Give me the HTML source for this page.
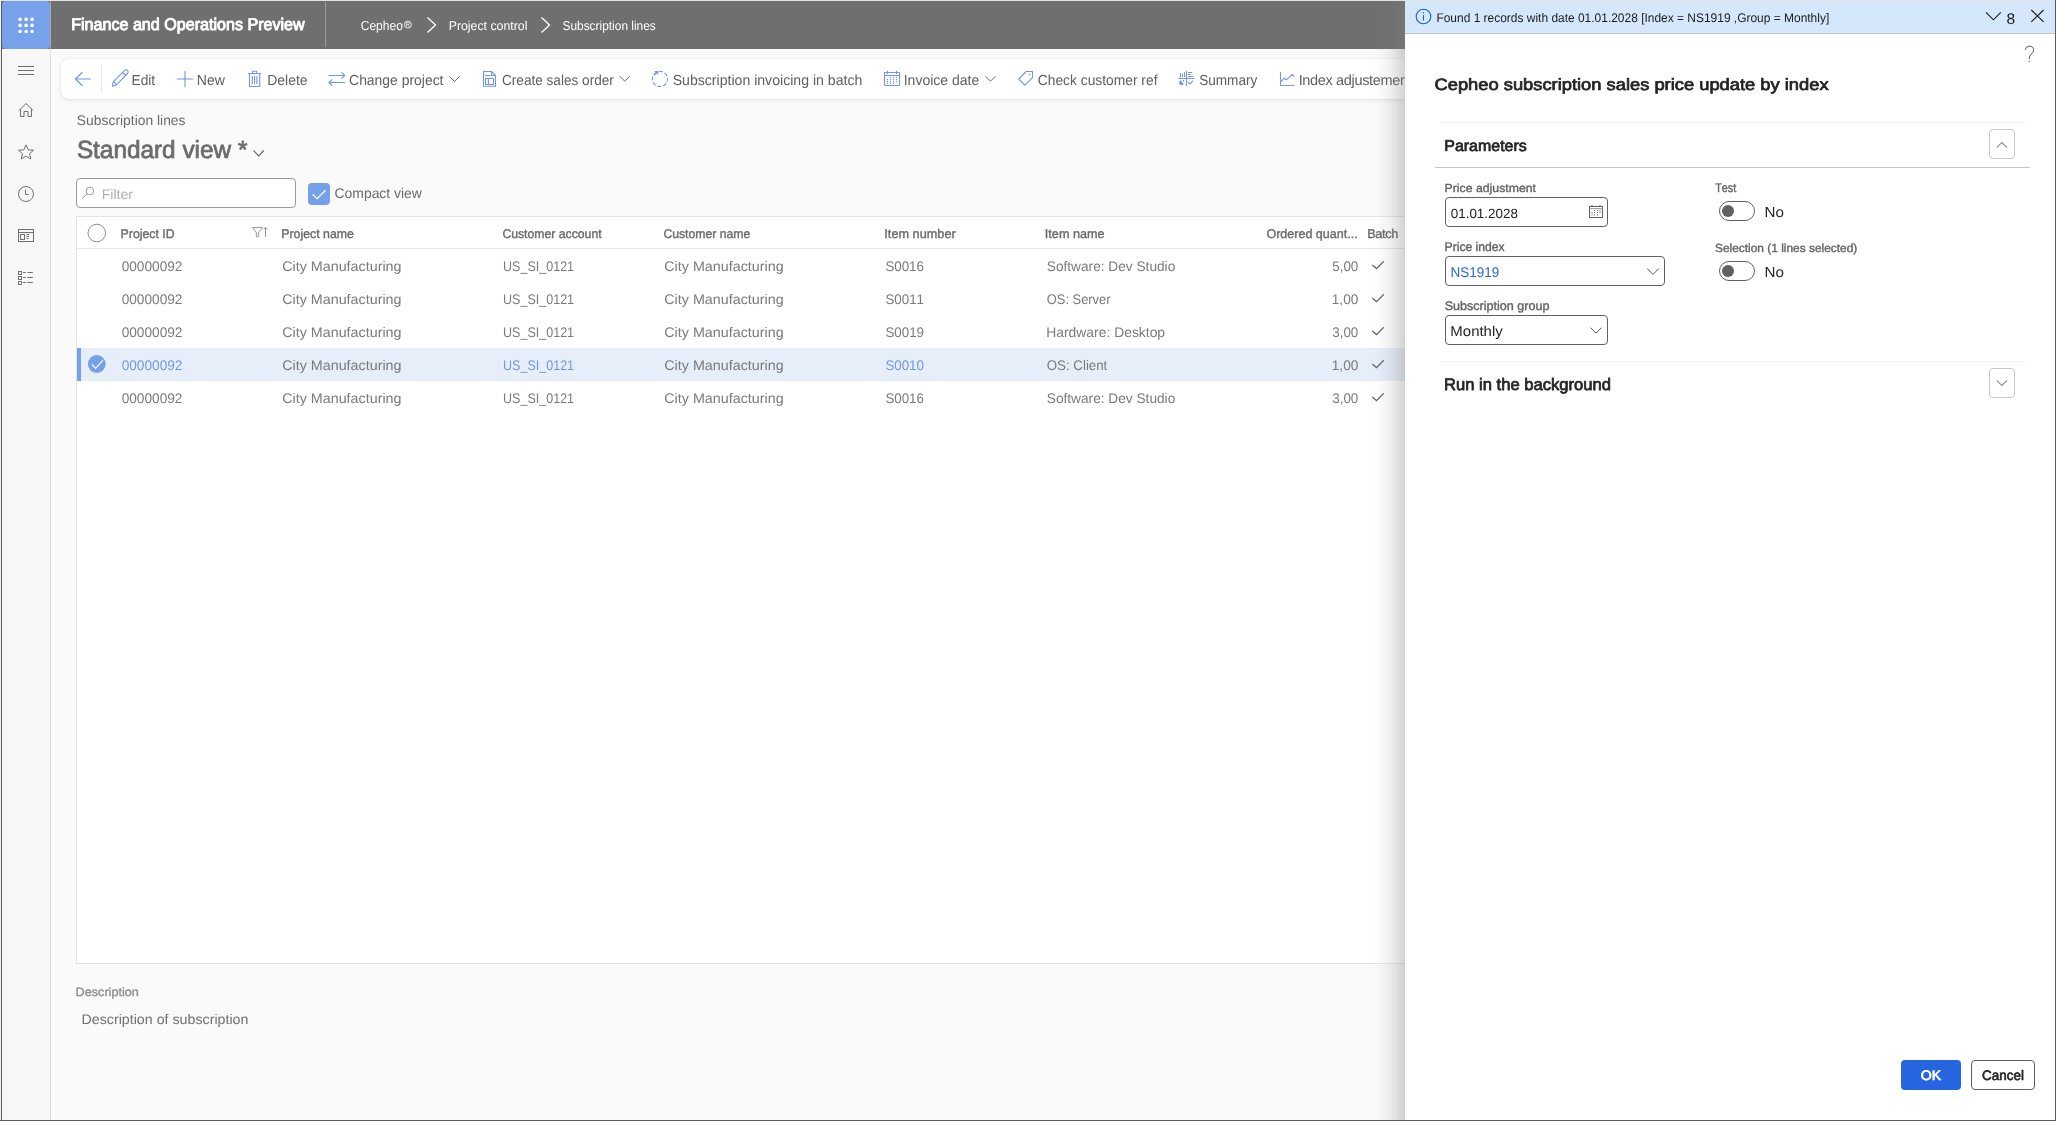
<!DOCTYPE html>
<html><head><meta charset="utf-8"><title>Subscription lines</title>
<style>
html,body{margin:0;padding:0;}
body{width:2056px;height:1121px;position:relative;overflow:hidden;background:#fbfafa;font-family:"Liberation Sans",sans-serif;font-kerning:none;}
.t{position:absolute;white-space:nowrap;font-kerning:none;text-rendering:geometricPrecision;}
.r{position:absolute;display:block;}
svg.r{overflow:visible;}
svg.tx{will-change:transform;}
text{font-family:"Liberation Sans",sans-serif;text-rendering:geometricPrecision;font-kerning:none;white-space:pre;}
</style></head><body>

<div class="r" style="left:2px;top:49px;width:48px;height:1071px;background:#f8f7f5;"></div>
<div class="r" style="left:50px;top:49px;width:1px;height:1071px;background:#dcdcdc;"></div>
<div class="r" style="left:2px;top:1px;width:2053px;height:48px;background:#6f6f6f;"></div>
<div class="r" style="left:2px;top:1px;width:48px;height:48px;background:#77a1ea;border-radius:4px;"></div>
<svg class="r" style="left:14px;top:13px;" width="24" height="24" viewBox="14 13 24 24"><circle cx="20.1" cy="19.4" r="1.8" fill="#fff"/><circle cx="20.1" cy="25.4" r="1.8" fill="#fff"/><circle cx="20.1" cy="31.5" r="1.8" fill="#fff"/><circle cx="26.1" cy="19.4" r="1.8" fill="#fff"/><circle cx="26.1" cy="25.4" r="1.8" fill="#fff"/><circle cx="26.1" cy="31.5" r="1.8" fill="#fff"/><circle cx="32.1" cy="19.4" r="1.8" fill="#fff"/><circle cx="32.1" cy="25.4" r="1.8" fill="#fff"/><circle cx="32.1" cy="31.5" r="1.8" fill="#fff"/></svg>
<div class="r" style="left:325px;top:2px;width:1px;height:45px;background:#9c9c9c;"></div>
<div class="r" style="left:50px;top:1px;width:1px;height:48px;background:#a9a9a9;"></div>
<svg class="r tx" style="left:68px;top:8px" width="245" height="30" viewBox="68 8 245 30"><text x="71.18" y="30" font-size="16.860" textLength="233.481" lengthAdjust="spacingAndGlyphs" fill="#ffffff" stroke="#ffffff" stroke-width="0.927" stroke-linejoin="round" style="">Finance and Operations Preview</text></svg>
<svg class="r tx" style="left:357px;top:13px" width="53" height="24" viewBox="357 13 53 24"><text x="360.69" y="30" font-size="13.081" textLength="42.218" lengthAdjust="spacingAndGlyphs" fill="#ffffff" style="">Cepheo</text></svg>
<svg class="r" style="left:400px;top:18px;" width="16" height="14" viewBox="400 18 16 14"><circle cx="407.85" cy="24.55" r="3.5" fill="none" stroke="#fff" stroke-width="0.85"/><path d="M406.6 26.6 V22.6 H408.2 Q409.3 22.6 409.3 23.6 Q409.3 24.6 408.2 24.6 H406.6 M408.2 24.6 L409.4 26.6" fill="none" stroke="#fff" stroke-width="0.7"/></svg>
<svg class="r tx" style="left:445px;top:13px" width="89" height="24" viewBox="445 13 89 24"><text x="448.69" y="30" font-size="12.791" textLength="78.735" lengthAdjust="spacingAndGlyphs" fill="#ffffff" style="">Project control</text></svg>
<svg class="r tx" style="left:559px;top:13px" width="104" height="24" viewBox="559 13 104 24"><text x="562.46" y="30" font-size="12.791" textLength="93.371" lengthAdjust="spacingAndGlyphs" fill="#ffffff" style="">Subscription lines</text></svg>
<svg class="r" style="left:420px;top:10px;" width="140" height="30" viewBox="420 10 140 30"><path d="M427.5 17.5 L435.5 25 L427.5 32.5" fill="none" stroke="#fff" stroke-width="1.3"/><path d="M541.5 17.5 L549.5 25 L541.5 32.5" fill="none" stroke="#fff" stroke-width="1.3"/></svg>
<svg class="r" style="left:10px;top:55px;" width="35" height="240" viewBox="10 55 35 240"><g fill="none" stroke="#707070" stroke-width="1"><path d="M18 66.5h16M18 70.5h16M18 74.5h16"/><path d="M19 110.5 L26 103.5 L33 110.5 M20.5 109 V116.5 H24 V111.5 H28 V116.5 H31.5 V109"/><path d="M26 144.8 L28.2 149.9 L33.6 150.2 L29.5 153.7 L30.8 159 L26 156.1 L21.2 159 L22.5 153.7 L18.4 150.2 L23.8 149.9 Z"/><circle cx="26" cy="194" r="7.5"/><path d="M25.5 189.5 V194.5 H28.8"/><rect x="18.5" y="229.5" width="15" height="12"/><path d="M18.5 232.5 H33.5"/><rect x="20.5" y="234.5" width="4" height="5"/><path d="M26.5 234.5h2.5M26.5 236.5h2.5M26.5 238.5h2"/><rect x="18.5" y="271.5" width="3" height="3"/><rect x="18.5" y="276.5" width="3" height="3"/><rect x="18.5" y="281.5" width="3" height="3"/><path d="M23 272.5h2.8M27.3 272.5h5.5M23 277.5h2.8M27.3 277.5h5.5M23 282.5h2.8M27.3 282.5h5.5"/></g></svg>
<div class="r" style="left:61px;top:59px;width:1400px;height:40px;background:#fff;border-radius:8px;box-shadow:0 1px 4px rgba(0,0,0,0.10),0 0 2px rgba(0,0,0,0.05);"></div>
<div class="r" style="left:101px;top:64px;width:1px;height:30px;background:#e8e8e8;"></div>
<svg class="r" style="left:60px;top:60px;" width="1350" height="40" viewBox="60 60 1350 40"><g fill="none" stroke="#7196ec" stroke-width="1.1" stroke-linecap="round" stroke-linejoin="round"><path d="M82 72.5 L75.5 79 L82 85.5 M75.5 79 H90.5"/><path d="M112.3 86.3 L113.2 81.8 L124.6 70.4 Q126.2 69.2 127.6 70.6 Q128.9 72 127.6 73.5 L116.3 84.9 Z M122.6 72.5 L125.6 75.5 M113.6 81.6 L116.6 84.6"/><path d="M185 71.2 V86.8 M177.2 79 H192.8"/><path d="M248.3 73.5 H260.8 M252.5 73.5 V71.3 H256.8 V73.5 M249.5 73.5 V86.5 H259.7 V73.5 M252.3 76.3 V83.8 M254.6 76.3 V83.8 M256.9 76.3 V83.8"/><path d="M329 75.5 H344.7 M341.8 72.7 L344.7 75.5 L341.8 78.3 M344.7 82.5 H329 M332 79.7 L329 82.5 L332 85.3"/><path d="M483.5 71.5 H491.5 L495.5 75.5 V86.3 H483.5 Z M491.5 71.5 V75.5 H495.5 M485.5 75.5 H490 M485.5 78.5 H493.5 V84.5 H485.5 Z M488.4 78.5 V84.5"/><circle cx="660" cy="79" r="7.6" stroke-dasharray="3.2 2.77" stroke-dashoffset="1"/><path d="M654.5 75 L657.8 71.7 M655.2 71.5 H657.8 V74"/><rect x="884.5" y="72.5" width="15" height="13" rx="0.5"/><path d="M884.5 75.5 H899.5 M887.5 71 V73.5 M896.5 71 V73.5"/><path d="M1026.2 71.5 H1032.5 V77.6 L1024.8 85.2 L1018.8 79 Z"/><path d="M1179 78.5 H1194 M1186.5 71.3 V85.8 M1180.5 73.6 V76.8 M1182.5 74.4 V76.8 M1184.5 72.5 V76.8 M1188.3 72.5 H1191.8 M1188.3 74.5 H1190.6 M1188.3 76.5 H1192.8 M1188.5 82.5 L1190.3 84 L1192.5 81.2"/><path d="M1280.5 72.3 V85.5 H1293.9 M1280.8 81.7 L1284.5 78.2 L1286.5 79.8 L1292.4 74.3 L1293.8 76.3"/></g><circle cx="890.5" cy="77.5" r="0.65" fill="#7196ec"/><circle cx="893.5" cy="77.5" r="0.65" fill="#7196ec"/><circle cx="896.5" cy="77.5" r="0.65" fill="#7196ec"/><circle cx="887.5" cy="79.5" r="0.65" fill="#7196ec"/><circle cx="890.5" cy="79.5" r="0.65" fill="#7196ec"/><circle cx="893.5" cy="79.5" r="0.65" fill="#7196ec"/><circle cx="896.5" cy="79.5" r="0.65" fill="#7196ec"/><circle cx="887.5" cy="81.5" r="0.65" fill="#7196ec"/><circle cx="890.5" cy="81.5" r="0.65" fill="#7196ec"/><circle cx="893.5" cy="81.5" r="0.65" fill="#7196ec"/><circle cx="896.5" cy="81.5" r="0.65" fill="#7196ec"/><circle cx="887.5" cy="83.5" r="0.65" fill="#7196ec"/><circle cx="890.5" cy="83.5" r="0.65" fill="#7196ec"/><circle cx="893.5" cy="83.5" r="0.65" fill="#7196ec"/><circle cx="1029.5" cy="74.5" r="0.8" fill="#7196ec"/><path d="M1181.8 80.6 A2.3 2.3 0 1 0 1183.7 82.8 L1181.8 82.8 Z" fill="#7196ec"/><path d="M1183 79.8 A2.3 2.3 0 0 1 1184.6 81.6 L1183 81.6 Z" fill="#7196ec"/><path d="M449.5 76.5 L454.5 81.5 L459.5 76.5 M619.7 76.2 L624.7 81.2 L629.7 76.2 M985.5 76.2 L990.5 81.2 L995.5 76.2" fill="none" stroke="#6a6a6a" stroke-width="1"/></svg>
<svg class="r tx" style="left:128px;top:66px" width="35" height="27" viewBox="128 66 35 27"><text x="131.47" y="85" font-size="14.535" textLength="23.731" lengthAdjust="spacingAndGlyphs" fill="#5f5f5f" style="">Edit</text></svg>
<svg class="r tx" style="left:193px;top:66px" width="40" height="27" viewBox="193 66 40 27"><text x="196.85" y="85" font-size="14.535" textLength="28.119" lengthAdjust="spacingAndGlyphs" fill="#5f5f5f" style="">New</text></svg>
<svg class="r tx" style="left:264px;top:66px" width="51" height="27" viewBox="264 66 51 27"><text x="267.15" y="85" font-size="14.535" textLength="40.471" lengthAdjust="spacingAndGlyphs" fill="#5f5f5f" style="">Delete</text></svg>
<svg class="r tx" style="left:346px;top:66px" width="105" height="27" viewBox="346 66 105 27"><text x="349.09" y="85" font-size="14.535" textLength="94.409" lengthAdjust="spacingAndGlyphs" fill="#5f5f5f" style="">Change project</text></svg>
<svg class="r tx" style="left:499px;top:66px" width="122" height="27" viewBox="499 66 122 27"><text x="502.01" y="85" font-size="14.535" textLength="111.816" lengthAdjust="spacingAndGlyphs" fill="#5f5f5f" style="">Create sales order</text></svg>
<svg class="r tx" style="left:669px;top:66px" width="200" height="27" viewBox="669 66 200 27"><text x="672.66" y="85" font-size="14.535" textLength="189.656" lengthAdjust="spacingAndGlyphs" fill="#5f5f5f" style="">Subscription invoicing in batch</text></svg>
<svg class="r tx" style="left:900px;top:66px" width="86" height="27" viewBox="900 66 86 27"><text x="903.71" y="85" font-size="14.535" textLength="75.617" lengthAdjust="spacingAndGlyphs" fill="#5f5f5f" style="">Invoice date</text></svg>
<svg class="r tx" style="left:1034px;top:66px" width="131" height="27" viewBox="1034 66 131 27"><text x="1037.80" y="85" font-size="14.535" textLength="119.681" lengthAdjust="spacingAndGlyphs" fill="#5f5f5f" style="">Check customer ref</text></svg>
<svg class="r tx" style="left:1196px;top:66px" width="69" height="27" viewBox="1196 66 69 27"><text x="1199.18" y="85" font-size="14.535" textLength="58.144" lengthAdjust="spacingAndGlyphs" fill="#5f5f5f" style="">Summary</text></svg>
<svg class="r tx" style="left:1295px;top:66px" width="124" height="27" viewBox="1295 66 124 27"><text x="1298.66" y="85" font-size="14.535" letter-spacing="-0.350" fill="#5f5f5f" style="">Index adjustement</text></svg>
<svg class="r tx" style="left:73px;top:107px" width="119" height="26" viewBox="73 107 119 26"><text x="76.87" y="125" font-size="13.953" textLength="108.630" lengthAdjust="spacingAndGlyphs" fill="#6b6b6b" style="">Subscription lines</text></svg>
<svg class="r tx" style="left:73px;top:127px" width="182" height="43" viewBox="73 127 182 43"><text x="76.89" y="158" font-size="24.855" textLength="170.486" lengthAdjust="spacingAndGlyphs" fill="#6b6b6b" stroke="#6b6b6b" stroke-width="0.746" stroke-linejoin="round" style="">Standard view *</text></svg>
<svg class="r" style="left:250px;top:145px;" width="20" height="15" viewBox="250 145 20 15"><path d="M253.5 150.5 L258.7 156 L263.9 150.5" fill="none" stroke="#6b6b6b" stroke-width="1.1"/></svg>
<div class="r" style="left:76px;top:178px;width:220px;height:30px;box-sizing:border-box;background:#fff;border:1px solid #9a9a9a;border-radius:4px;"></div>
<svg class="r" style="left:78px;top:183px;" width="20" height="20" viewBox="78 183 20 20"><g fill="none" stroke="#9c9c9c" stroke-width="1"><circle cx="89.8" cy="191" r="3.8"/><path d="M87.2 193.6 L82 198.8"/></g></svg>
<svg class="r tx" style="left:98px;top:181px" width="42" height="26" viewBox="98 181 42 26"><text x="101.75" y="199" font-size="13.808" textLength="31.079" lengthAdjust="spacingAndGlyphs" fill="#b0b0b0" style="">Filter</text></svg>
<div class="r" style="left:308px;top:183px;width:22px;height:22px;background:#77a0ea;border-radius:4px;"></div>
<svg class="r" style="left:308px;top:183px;" width="22" height="22" viewBox="308 183 22 22"><path d="M312.6 194.3 L317.1 198.6 L325.6 190.3" fill="none" stroke="#fff" stroke-width="1.2"/></svg>
<svg class="r tx" style="left:331px;top:180px" width="98" height="26" viewBox="331 180 98 26"><text x="334.59" y="198" font-size="14.099" textLength="87.272" lengthAdjust="spacingAndGlyphs" fill="#6b6b6b" style="">Compact view</text></svg>
<div class="r" style="left:76px;top:216px;width:1400px;height:748px;box-sizing:border-box;background:#fff;border:1px solid #e3e3e3;border-right:none;"></div>
<div class="r" style="left:77px;top:248px;width:1400px;height:1px;background:#e6e6e6;"></div>
<svg class="r" style="left:80px;top:220px;" width="30" height="30" viewBox="80 220 30 30"><circle cx="96.8" cy="233" r="8.8" fill="none" stroke="#8f8f8f" stroke-width="1"/></svg>
<svg class="r tx" style="left:117px;top:221px" width="65" height="24" viewBox="117 221 65 24"><text x="120.59" y="238" font-size="12.645" textLength="53.998" lengthAdjust="spacingAndGlyphs" fill="#6b6b6b" stroke="#6b6b6b" stroke-width="0.379" stroke-linejoin="round" style="">Project ID</text></svg>
<svg class="r" style="left:250px;top:222px;" width="22" height="18" viewBox="250 222 22 18"><g fill="none" stroke="#8a8a8a" stroke-width="0.9"><path d="M252.3 227.6 H262.6 L258.6 232.2 V236.4 H256.3 V232.2 Z"/><path d="M265.5 236.8 V227.3 M263.3 229.5 L265.5 227.3 L267.7 229.5"/></g></svg>
<svg class="r tx" style="left:278px;top:221px" width="84" height="24" viewBox="278 221 84 24"><text x="281.19" y="238" font-size="12.645" textLength="72.762" lengthAdjust="spacingAndGlyphs" fill="#6b6b6b" stroke="#6b6b6b" stroke-width="0.379" stroke-linejoin="round" style="">Project name</text></svg>
<svg class="r tx" style="left:499px;top:221px" width="110" height="24" viewBox="499 221 110 24"><text x="502.38" y="238" font-size="12.645" textLength="99.210" lengthAdjust="spacingAndGlyphs" fill="#6b6b6b" stroke="#6b6b6b" stroke-width="0.379" stroke-linejoin="round" style="">Customer account</text></svg>
<svg class="r tx" style="left:660px;top:221px" width="97" height="24" viewBox="660 221 97 24"><text x="663.38" y="238" font-size="12.645" textLength="86.964" lengthAdjust="spacingAndGlyphs" fill="#6b6b6b" stroke="#6b6b6b" stroke-width="0.379" stroke-linejoin="round" style="">Customer name</text></svg>
<svg class="r tx" style="left:881px;top:221px" width="83" height="24" viewBox="881 221 83 24"><text x="884.33" y="238" font-size="12.645" textLength="71.385" lengthAdjust="spacingAndGlyphs" fill="#6b6b6b" stroke="#6b6b6b" stroke-width="0.379" stroke-linejoin="round" style="">Item number</text></svg>
<svg class="r tx" style="left:1041px;top:221px" width="71" height="24" viewBox="1041 221 71 24"><text x="1044.83" y="238" font-size="12.645" textLength="59.729" lengthAdjust="spacingAndGlyphs" fill="#6b6b6b" stroke="#6b6b6b" stroke-width="0.379" stroke-linejoin="round" style="">Item name</text></svg>
<svg class="r tx" style="left:1263px;top:221px" width="101" height="24" viewBox="1263 221 101 24"><text x="1266.41" y="238" font-size="12.645" textLength="91.237" lengthAdjust="spacingAndGlyphs" fill="#6b6b6b" stroke="#6b6b6b" stroke-width="0.379" stroke-linejoin="round" style="">Ordered quant...</text></svg>
<svg class="r tx" style="left:1364px;top:221px" width="42" height="24" viewBox="1364 221 42 24"><text x="1367.26" y="238" font-size="12.645" letter-spacing="-0.300" fill="#6b6b6b" stroke="#6b6b6b" stroke-width="0.379" stroke-linejoin="round" style="">Batch</text></svg>
<svg class="r tx" style="left:118px;top:253px" width="71" height="26" viewBox="118 253 71 26"><text x="121.67" y="271" font-size="13.953" textLength="60.822" lengthAdjust="spacingAndGlyphs" fill="#7a7a7a" style="">00000092</text></svg>
<svg class="r tx" style="left:279px;top:253px" width="129" height="26" viewBox="279 253 129 26"><text x="282.17" y="271" font-size="13.953" textLength="119.350" lengthAdjust="spacingAndGlyphs" fill="#7a7a7a" style="">City Manufacturing</text></svg>
<svg class="r tx" style="left:500px;top:253px" width="82" height="26" viewBox="500 253 82 26"><text x="503.03" y="271" font-size="13.953" textLength="71.079" lengthAdjust="spacingAndGlyphs" fill="#7a7a7a" style="">US_SI_0121</text></svg>
<svg class="r tx" style="left:661px;top:253px" width="129" height="26" viewBox="661 253 129 26"><text x="664.27" y="271" font-size="13.953" textLength="119.350" lengthAdjust="spacingAndGlyphs" fill="#7a7a7a" style="">City Manufacturing</text></svg>
<svg class="r tx" style="left:882px;top:253px" width="49" height="26" viewBox="882 253 49 26"><text x="885.39" y="271" font-size="13.953" textLength="38.593" lengthAdjust="spacingAndGlyphs" fill="#7a7a7a" style="">S0016</text></svg>
<svg class="r tx" style="left:1043px;top:253px" width="139" height="26" viewBox="1043 253 139 26"><text x="1046.78" y="271" font-size="13.953" textLength="128.496" lengthAdjust="spacingAndGlyphs" fill="#7a7a7a" style="">Software: Dev Studio</text></svg>
<svg class="r tx" style="left:1329px;top:253px" width="37" height="26" viewBox="1329 253 37 26"><text x="1332.26" y="271" font-size="13.953" textLength="26.059" lengthAdjust="spacingAndGlyphs" fill="#7a7a7a" style="">5,00</text></svg>
<svg class="r" style="left:1368px;top:257px;" width="20" height="14" viewBox="1368 257 20 14"><path d="M1372.3 265.1 L1376.5 268.6 L1383.8 261.2" fill="none" stroke="#666" stroke-width="1.25"/></svg>
<svg class="r tx" style="left:118px;top:286px" width="71" height="26" viewBox="118 286 71 26"><text x="121.67" y="304" font-size="13.953" textLength="60.822" lengthAdjust="spacingAndGlyphs" fill="#7a7a7a" style="">00000092</text></svg>
<svg class="r tx" style="left:279px;top:286px" width="129" height="26" viewBox="279 286 129 26"><text x="282.17" y="304" font-size="13.953" textLength="119.350" lengthAdjust="spacingAndGlyphs" fill="#7a7a7a" style="">City Manufacturing</text></svg>
<svg class="r tx" style="left:500px;top:286px" width="82" height="26" viewBox="500 286 82 26"><text x="503.03" y="304" font-size="13.953" textLength="71.079" lengthAdjust="spacingAndGlyphs" fill="#7a7a7a" style="">US_SI_0121</text></svg>
<svg class="r tx" style="left:661px;top:286px" width="129" height="26" viewBox="661 286 129 26"><text x="664.27" y="304" font-size="13.953" textLength="119.350" lengthAdjust="spacingAndGlyphs" fill="#7a7a7a" style="">City Manufacturing</text></svg>
<svg class="r tx" style="left:882px;top:286px" width="49" height="26" viewBox="882 286 49 26"><text x="885.39" y="304" font-size="13.953" textLength="38.660" lengthAdjust="spacingAndGlyphs" fill="#7a7a7a" style="">S0011</text></svg>
<svg class="r tx" style="left:1043px;top:286px" width="74" height="26" viewBox="1043 286 74 26"><text x="1046.79" y="304" font-size="13.953" textLength="63.724" lengthAdjust="spacingAndGlyphs" fill="#7a7a7a" style="">OS: Server</text></svg>
<svg class="r tx" style="left:1328px;top:286px" width="38" height="26" viewBox="1328 286 38 26"><text x="1331.76" y="304" font-size="13.953" textLength="26.573" lengthAdjust="spacingAndGlyphs" fill="#7a7a7a" style="">1,00</text></svg>
<svg class="r" style="left:1368px;top:290px;" width="20" height="14" viewBox="1368 290 20 14"><path d="M1372.3 298.1 L1376.5 301.6 L1383.8 294.2" fill="none" stroke="#666" stroke-width="1.25"/></svg>
<svg class="r tx" style="left:118px;top:319px" width="71" height="26" viewBox="118 319 71 26"><text x="121.67" y="337" font-size="13.953" textLength="60.822" lengthAdjust="spacingAndGlyphs" fill="#7a7a7a" style="">00000092</text></svg>
<svg class="r tx" style="left:279px;top:319px" width="129" height="26" viewBox="279 319 129 26"><text x="282.17" y="337" font-size="13.953" textLength="119.350" lengthAdjust="spacingAndGlyphs" fill="#7a7a7a" style="">City Manufacturing</text></svg>
<svg class="r tx" style="left:500px;top:319px" width="82" height="26" viewBox="500 319 82 26"><text x="503.03" y="337" font-size="13.953" textLength="71.079" lengthAdjust="spacingAndGlyphs" fill="#7a7a7a" style="">US_SI_0121</text></svg>
<svg class="r tx" style="left:661px;top:319px" width="129" height="26" viewBox="661 319 129 26"><text x="664.27" y="337" font-size="13.953" textLength="119.350" lengthAdjust="spacingAndGlyphs" fill="#7a7a7a" style="">City Manufacturing</text></svg>
<svg class="r tx" style="left:882px;top:319px" width="49" height="26" viewBox="882 319 49 26"><text x="885.39" y="337" font-size="13.953" textLength="38.640" lengthAdjust="spacingAndGlyphs" fill="#7a7a7a" style="">S0019</text></svg>
<svg class="r tx" style="left:1043px;top:319px" width="130" height="26" viewBox="1043 319 130 26"><text x="1046.26" y="337" font-size="13.953" textLength="118.822" lengthAdjust="spacingAndGlyphs" fill="#7a7a7a" style="">Hardware: Desktop</text></svg>
<svg class="r tx" style="left:1329px;top:319px" width="37" height="26" viewBox="1329 319 37 26"><text x="1332.29" y="337" font-size="13.953" textLength="26.032" lengthAdjust="spacingAndGlyphs" fill="#7a7a7a" style="">3,00</text></svg>
<svg class="r" style="left:1368px;top:323px;" width="20" height="14" viewBox="1368 323 20 14"><path d="M1372.3 331.1 L1376.5 334.6 L1383.8 327.2" fill="none" stroke="#666" stroke-width="1.25"/></svg>
<div class="r" style="left:77px;top:348px;width:1330px;height:33px;background:#e6eefa;"></div>
<div class="r" style="left:77px;top:348px;width:4px;height:33px;background:#77a0ea;"></div>
<svg class="r" style="left:84px;top:351px;" width="26" height="26" viewBox="84 351 26 26"><circle cx="96.8" cy="364" r="8.9" fill="#77a0ea"/><path d="M91.9 364.4 L95.6 368.4 L103 360.2" fill="none" stroke="#fff" stroke-width="1.1"/></svg>
<svg class="r tx" style="left:118px;top:352px" width="71" height="26" viewBox="118 352 71 26"><text x="121.67" y="370" font-size="13.953" textLength="60.822" lengthAdjust="spacingAndGlyphs" fill="#7496e0" style="">00000092</text></svg>
<svg class="r tx" style="left:279px;top:352px" width="129" height="26" viewBox="279 352 129 26"><text x="282.17" y="370" font-size="13.953" textLength="119.350" lengthAdjust="spacingAndGlyphs" fill="#7a7a7a" style="">City Manufacturing</text></svg>
<svg class="r tx" style="left:500px;top:352px" width="82" height="26" viewBox="500 352 82 26"><text x="503.03" y="370" font-size="13.953" textLength="71.079" lengthAdjust="spacingAndGlyphs" fill="#7496e0" style="">US_SI_0121</text></svg>
<svg class="r tx" style="left:661px;top:352px" width="129" height="26" viewBox="661 352 129 26"><text x="664.27" y="370" font-size="13.953" textLength="119.350" lengthAdjust="spacingAndGlyphs" fill="#7a7a7a" style="">City Manufacturing</text></svg>
<svg class="r tx" style="left:882px;top:352px" width="49" height="26" viewBox="882 352 49 26"><text x="885.39" y="370" font-size="13.953" textLength="38.525" lengthAdjust="spacingAndGlyphs" fill="#7496e0" style="">S0010</text></svg>
<svg class="r tx" style="left:1043px;top:352px" width="71" height="26" viewBox="1043 352 71 26"><text x="1046.77" y="370" font-size="13.953" textLength="60.526" lengthAdjust="spacingAndGlyphs" fill="#7a7a7a" style="">OS: Client</text></svg>
<svg class="r tx" style="left:1328px;top:352px" width="38" height="26" viewBox="1328 352 38 26"><text x="1331.76" y="370" font-size="13.953" textLength="26.573" lengthAdjust="spacingAndGlyphs" fill="#7a7a7a" style="">1,00</text></svg>
<svg class="r" style="left:1368px;top:356px;" width="20" height="14" viewBox="1368 356 20 14"><path d="M1372.3 364.1 L1376.5 367.6 L1383.8 360.2" fill="none" stroke="#666" stroke-width="1.25"/></svg>
<svg class="r tx" style="left:118px;top:385px" width="71" height="26" viewBox="118 385 71 26"><text x="121.67" y="403" font-size="13.953" textLength="60.822" lengthAdjust="spacingAndGlyphs" fill="#7a7a7a" style="">00000092</text></svg>
<svg class="r tx" style="left:279px;top:385px" width="129" height="26" viewBox="279 385 129 26"><text x="282.17" y="403" font-size="13.953" textLength="119.350" lengthAdjust="spacingAndGlyphs" fill="#7a7a7a" style="">City Manufacturing</text></svg>
<svg class="r tx" style="left:500px;top:385px" width="82" height="26" viewBox="500 385 82 26"><text x="503.03" y="403" font-size="13.953" textLength="71.079" lengthAdjust="spacingAndGlyphs" fill="#7a7a7a" style="">US_SI_0121</text></svg>
<svg class="r tx" style="left:661px;top:385px" width="129" height="26" viewBox="661 385 129 26"><text x="664.27" y="403" font-size="13.953" textLength="119.350" lengthAdjust="spacingAndGlyphs" fill="#7a7a7a" style="">City Manufacturing</text></svg>
<svg class="r tx" style="left:882px;top:385px" width="49" height="26" viewBox="882 385 49 26"><text x="885.39" y="403" font-size="13.953" textLength="38.593" lengthAdjust="spacingAndGlyphs" fill="#7a7a7a" style="">S0016</text></svg>
<svg class="r tx" style="left:1043px;top:385px" width="139" height="26" viewBox="1043 385 139 26"><text x="1046.78" y="403" font-size="13.953" textLength="128.496" lengthAdjust="spacingAndGlyphs" fill="#7a7a7a" style="">Software: Dev Studio</text></svg>
<svg class="r tx" style="left:1329px;top:385px" width="37" height="26" viewBox="1329 385 37 26"><text x="1332.29" y="403" font-size="13.953" textLength="26.032" lengthAdjust="spacingAndGlyphs" fill="#7a7a7a" style="">3,00</text></svg>
<svg class="r" style="left:1368px;top:389px;" width="20" height="14" viewBox="1368 389 20 14"><path d="M1372.3 397.1 L1376.5 400.6 L1383.8 393.2" fill="none" stroke="#666" stroke-width="1.25"/></svg>
<svg class="r tx" style="left:72px;top:980px" width="73" height="23" viewBox="72 980 73 23"><text x="75.56" y="996" font-size="12.064" textLength="63.362" lengthAdjust="spacingAndGlyphs" fill="#8e8e8e" stroke="#8e8e8e" stroke-width="0.362" stroke-linejoin="round" style="">Description</text></svg>
<svg class="r tx" style="left:78px;top:1006px" width="177" height="26" viewBox="78 1006 177 26"><text x="81.53" y="1024" font-size="13.953" textLength="166.892" lengthAdjust="spacingAndGlyphs" fill="#707070" style="">Description of subscription</text></svg>
<div class="r" style="left:1372px;top:1px;width:33px;height:1120px;background:linear-gradient(to right,rgba(128,128,128,0) 0%,rgba(128,128,128,0.03) 25%,rgba(128,128,128,0.10) 50%,rgba(128,128,128,0.20) 72%,rgba(128,128,128,0.30) 90%,rgba(128,128,128,0.36) 100%);"></div>
<div class="r" style="left:1405px;top:1px;width:650px;height:1119px;background:#fff;"></div>
<div class="r" style="left:1405px;top:1px;width:650px;height:32px;background:#d4e7fb;"></div>
<div class="r" style="left:1405px;top:33px;width:650px;height:1px;background:#c4c4c4;"></div>
<svg class="r" style="left:1414px;top:7px;" width="20" height="20" viewBox="1414 7 20 20"><circle cx="1423.5" cy="16.5" r="7.3" fill="none" stroke="#1866b8" stroke-width="1.1"/><path d="M1423.5 15 V20.5" stroke="#1866b8" stroke-width="1.1"/><circle cx="1423.5" cy="12.8" r="0.7" fill="#1866b8"/></svg>
<svg class="r tx" style="left:1433px;top:5px" width="404" height="24" viewBox="1433 5 404 24"><text x="1436.42" y="22" font-size="12.500" textLength="392.833" lengthAdjust="spacingAndGlyphs" fill="#1b1b1b" style="">Found 1 records with date 01.01.2028 [Index = NS1919 ,Group = Monthly]</text></svg>
<svg class="r" style="left:1980px;top:5px;" width="70" height="25" viewBox="1980 5 70 25"><g fill="none" stroke="#1b1b1b" stroke-width="1.1"><path d="M1986 12.3 L1993.4 19.8 L2000.8 12.3"/><path d="M2031.3 10 L2043.6 21.8 M2043.6 10 L2031.3 21.8"/></g></svg>
<svg class="r tx" style="left:2003px;top:4px" width="19" height="28" viewBox="2003 4 19 28"><text x="2006.42" y="24" font-size="15.552" letter-spacing="0.000" fill="#1b1b1b" style="">8</text></svg>
<svg class="r" style="left:2020px;top:42px;" width="20" height="25" viewBox="2020 42 20 25"><path d="M2025.3 49.8 Q2025.6 46.2 2029.5 46.2 Q2033.6 46.4 2033.6 50 Q2033.5 52.4 2031.2 54.2 Q2029.3 55.8 2029.3 58.2 V59" fill="none" stroke="#4a4a4a" stroke-width="0.9"/><circle cx="2029.3" cy="61.3" r="0.65" fill="#4a4a4a"/></svg>
<svg class="r tx" style="left:1431px;top:69px" width="405" height="30" viewBox="1431 69 405 30"><text x="1434.47" y="90" font-size="16.424" textLength="394.127" lengthAdjust="spacingAndGlyphs" fill="#242424" stroke="#242424" stroke-width="0.739" stroke-linejoin="round" style="">Cepheo subscription sales price update by index</text></svg>
<div class="r" style="left:1440px;top:122px;width:585px;height:1px;background:#f0f0f0;"></div>
<svg class="r tx" style="left:1441px;top:131px" width="93" height="29" viewBox="1441 131 93 29"><text x="1444.29" y="151" font-size="15.698" textLength="82.486" lengthAdjust="spacingAndGlyphs" fill="#242424" stroke="#242424" stroke-width="0.706" stroke-linejoin="round" style="">Parameters</text></svg>
<div class="r" style="left:1989px;top:129px;width:26px;height:30px;box-sizing:border-box;border:1px solid #c8c8c8;border-radius:4px;"></div>
<svg class="r" style="left:1990px;top:135px;" width="24" height="15" viewBox="1990 135 24 15"><path d="M1996.8 147.5 L2001.9 142.5 L2007 147.5" fill="none" stroke="#555" stroke-width="1"/></svg>
<div class="r" style="left:1435px;top:167px;width:595px;height:1px;background:#c8c6c4;"></div>
<svg class="r tx" style="left:1441px;top:177px" width="102" height="22" viewBox="1441 177 102 22"><text x="1444.59" y="192" font-size="11.628" textLength="91.397" lengthAdjust="spacingAndGlyphs" fill="#616161" stroke="#616161" stroke-width="0.349" stroke-linejoin="round" style="">Price adjustment</text></svg>
<div class="r" style="left:1445px;top:197px;width:163px;height:30px;box-sizing:border-box;border:1px solid #616161;border-radius:4px;background:#fff;"></div>
<svg class="r tx" style="left:1447px;top:200px" width="78" height="25" viewBox="1447 200 78 25"><text x="1450.78" y="218" font-size="13.372" textLength="67.106" lengthAdjust="spacingAndGlyphs" fill="#242424" style="">01.01.2028</text></svg>
<svg class="r" style="left:1585px;top:200px;" width="25" height="25" viewBox="1585 200 25 25"><g fill="none" stroke="#616161" stroke-width="1"><rect x="1589.5" y="206.5" width="13" height="11"/><path d="M1589.5 208.6 H1602.5" stroke="#9a9a9a"/><path d="M1592 205 V207 M1600 205 V207"/></g><rect x="1594" y="210" width="1.1" height="1.1" fill="#6a6a6a"/><rect x="1597" y="210" width="1.1" height="1.1" fill="#6a6a6a"/><rect x="1599.5" y="210" width="1.1" height="1.1" fill="#6a6a6a"/><rect x="1591.5" y="212" width="1.1" height="1.1" fill="#6a6a6a"/><rect x="1594" y="212" width="1.1" height="1.1" fill="#6a6a6a"/><rect x="1597" y="212" width="1.1" height="1.1" fill="#6a6a6a"/><rect x="1599.5" y="212" width="1.1" height="1.1" fill="#6a6a6a"/><rect x="1591.5" y="214.3" width="1.1" height="1.1" fill="#6a6a6a"/><rect x="1594" y="214.3" width="1.1" height="1.1" fill="#6a6a6a"/><rect x="1597" y="214.3" width="1.1" height="1.1" fill="#6a6a6a"/></svg>
<svg class="r tx" style="left:1712px;top:175px" width="32" height="24" viewBox="1712 175 32 24"><text x="1715.26" y="192" font-size="12.500" textLength="21.022" lengthAdjust="spacingAndGlyphs" fill="#616161" stroke="#616161" stroke-width="0.375" stroke-linejoin="round" style="">Test</text></svg>
<div class="r" style="left:1719px;top:201px;width:36px;height:20px;box-sizing:border-box;border:1px solid #616161;border-radius:10px;background:#fff;"></div>
<div class="r" style="left:1722px;top:205px;width:12px;height:12px;background:#616161;border-radius:50%;"></div>
<svg class="r tx" style="left:1761px;top:198px" width="30" height="27" viewBox="1761 198 30 27"><text x="1764.56" y="217" font-size="14.535" textLength="19.380" lengthAdjust="spacingAndGlyphs" fill="#242424" style="">No</text></svg>
<svg class="r tx" style="left:1441px;top:234px" width="71" height="24" viewBox="1441 234 71 24"><text x="1444.61" y="251" font-size="12.500" textLength="59.924" lengthAdjust="spacingAndGlyphs" fill="#616161" stroke="#616161" stroke-width="0.375" stroke-linejoin="round" style="">Price index</text></svg>
<div class="r" style="left:1445px;top:256px;width:220px;height:30px;box-sizing:border-box;border:1px solid #616161;border-radius:4px;background:#fff;"></div>
<svg class="r tx" style="left:1447px;top:259px" width="60" height="26" viewBox="1447 259 60 26"><text x="1450.49" y="277" font-size="14.099" textLength="48.849" lengthAdjust="spacingAndGlyphs" fill="#2266dd" style="">NS1919</text></svg>
<svg class="r" style="left:1640px;top:262px;" width="25" height="18" viewBox="1640 262 25 18"><path d="M1647.2 268.6 L1653 274.4 L1658.8 268.6" fill="none" stroke="#555" stroke-width="1"/></svg>
<svg class="r tx" style="left:1711px;top:236px" width="153" height="22" viewBox="1711 236 153 22"><text x="1714.96" y="252" font-size="11.773" textLength="142.279" lengthAdjust="spacingAndGlyphs" fill="#616161" stroke="#616161" stroke-width="0.353" stroke-linejoin="round" style="">Selection (1 lines selected)</text></svg>
<div class="r" style="left:1719px;top:261px;width:36px;height:20px;box-sizing:border-box;border:1px solid #616161;border-radius:10px;background:#fff;"></div>
<div class="r" style="left:1722px;top:265px;width:12px;height:12px;background:#616161;border-radius:50%;"></div>
<svg class="r tx" style="left:1761px;top:258px" width="30" height="27" viewBox="1761 258 30 27"><text x="1764.56" y="277" font-size="14.535" textLength="19.380" lengthAdjust="spacingAndGlyphs" fill="#242424" style="">No</text></svg>
<svg class="r tx" style="left:1441px;top:293px" width="115" height="24" viewBox="1441 293 115 24"><text x="1444.63" y="310" font-size="12.500" textLength="104.798" lengthAdjust="spacingAndGlyphs" fill="#616161" stroke="#616161" stroke-width="0.375" stroke-linejoin="round" style="">Subscription group</text></svg>
<div class="r" style="left:1445px;top:315px;width:163px;height:30px;box-sizing:border-box;border:1px solid #616161;border-radius:4px;background:#fff;"></div>
<svg class="r tx" style="left:1447px;top:317px" width="64" height="26" viewBox="1447 317 64 26"><text x="1450.37" y="336" font-size="14.244" textLength="52.356" lengthAdjust="spacingAndGlyphs" fill="#242424" style="">Monthly</text></svg>
<svg class="r" style="left:1585px;top:320px;" width="25" height="18" viewBox="1585 320 25 18"><path d="M1590.5 327.6 L1596 333.1 L1601.5 327.6" fill="none" stroke="#555" stroke-width="1"/></svg>
<div class="r" style="left:1440px;top:361px;width:585px;height:1px;background:#f0f0f0;"></div>
<svg class="r tx" style="left:1441px;top:368px" width="177" height="30" viewBox="1441 368 177 30"><text x="1444.04" y="390" font-size="16.715" textLength="166.930" lengthAdjust="spacingAndGlyphs" fill="#242424" stroke="#242424" stroke-width="0.752" stroke-linejoin="round" style="">Run in the background</text></svg>
<div class="r" style="left:1989px;top:368px;width:26px;height:30px;box-sizing:border-box;border:1px solid #c8c8c8;border-radius:4px;"></div>
<svg class="r" style="left:1990px;top:375px;" width="24" height="15" viewBox="1990 375 24 15"><path d="M1996.8 380.5 L2001.9 385.5 L2007 380.5" fill="none" stroke="#555" stroke-width="1"/></svg>
<div class="r" style="left:1901px;top:1060px;width:60px;height:30px;background:#2565e0;border-radius:4px;"></div>
<svg class="r tx" style="left:1917px;top:1062px" width="31" height="26" viewBox="1917 1062 31 26"><text x="1920.73" y="1080" font-size="13.808" textLength="20.428" lengthAdjust="spacingAndGlyphs" fill="#ffffff" stroke="#ffffff" stroke-width="0.690" stroke-linejoin="round" style="">OK</text></svg>
<div class="r" style="left:1971px;top:1060px;width:64px;height:30px;box-sizing:border-box;border:1px solid #616161;border-radius:4px;background:#fff;"></div>
<svg class="r tx" style="left:1979px;top:1062px" width="52" height="26" viewBox="1979 1062 52 26"><text x="1982.12" y="1080" font-size="13.808" textLength="41.779" lengthAdjust="spacingAndGlyphs" fill="#242424" stroke="#242424" stroke-width="0.621" stroke-linejoin="round" style="">Cancel</text></svg>
<div class="r" style="left:0px;top:0px;width:2056px;height:1px;background:#e3e3e3;"></div>
<div class="r" style="left:0px;top:0px;width:1px;height:1121px;background:#f2f2f2;"></div>
<div class="r" style="left:1px;top:1px;width:1px;height:1120px;background:#5a5a5a;"></div>
<div class="r" style="left:2055px;top:0px;width:1px;height:1121px;background:#5a5a5a;"></div>
<div class="r" style="left:0px;top:1120px;width:2056px;height:1px;background:#5a5a5a;"></div>
</body></html>
